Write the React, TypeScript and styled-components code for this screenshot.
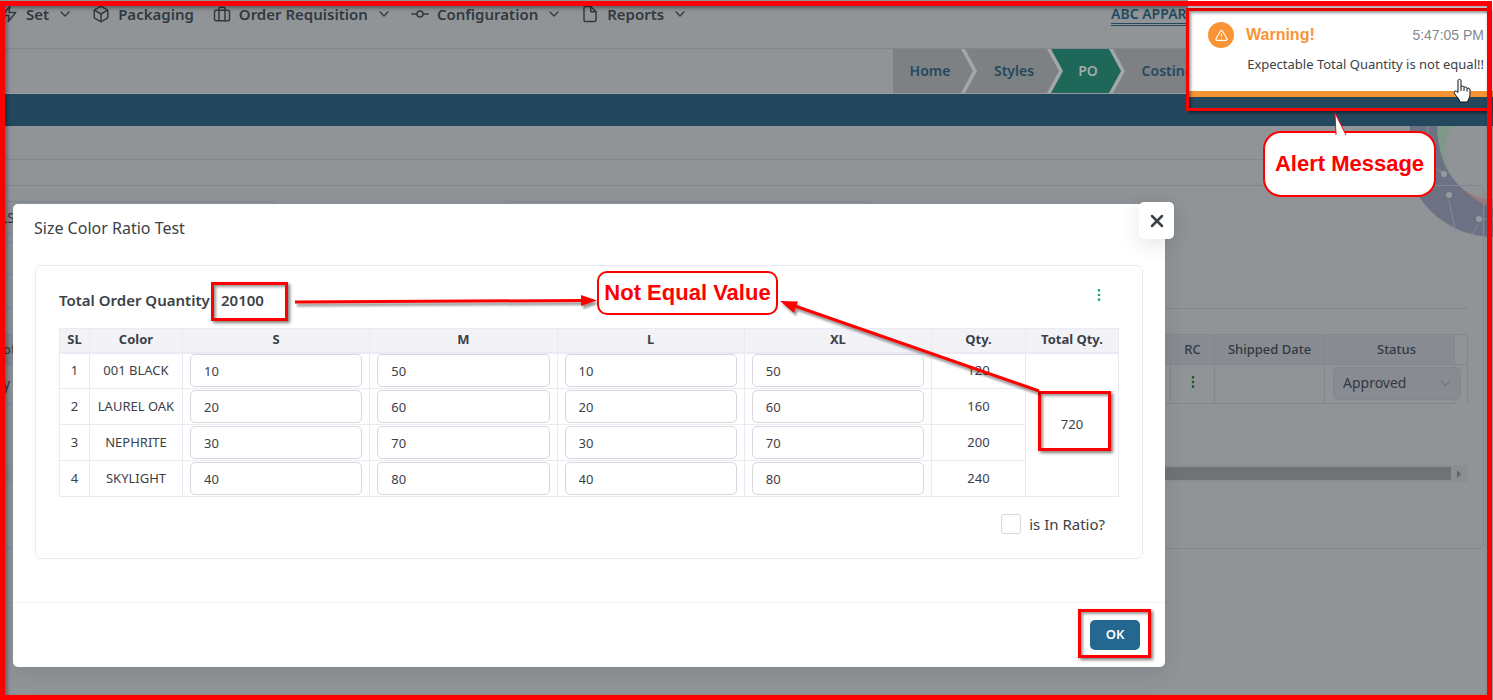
import React from 'react';
import styled, { createGlobalStyle, css } from 'styled-components';
import {
  FiAlertTriangle,
  FiBox,
  FiBriefcase,
  FiChevronDown,
  FiFile,
  FiGitCommit,
  FiMoreVertical,
  FiX,
  FiZap,
} from 'react-icons/fi';

const c = {
  page: '#909497',
  line: '#82868f',
  head: '#888b92',
  dimText: '#33393f',
  dimBlue: '#23495f',
  text: '#3b4147',
  border: '#ebe9f1',
  field: '#d8d6de',
  red: '#ff0000',
  orange: '#f99436',
};

const GlobalStyle = createGlobalStyle`
  *, *::before, *::after { box-sizing: border-box; }
  html { background: ${c.page}; }
  body {
    margin: 0;
    overflow: hidden;
    color: ${c.text};
    font-family: "Noto Sans", "Open Sans", sans-serif;
    font-size: 14px;
    line-height: 20px;
  }
  button, input, select { font: inherit; color: inherit; }
`;

/* ---------- page behind the dialog ---------- */

const Page = styled.div`
  position: relative;
  min-height: 100vh;
  overflow: hidden;
  background: ${c.page};
  color: ${c.dimText};
`;

const TopBar = styled.header`
  display: flex;
  justify-content: space-between;
  height: 49px;
  padding: 4px 300px 0 0;
  border-bottom: 1px solid ${c.line};
`;

const Nav = styled.nav`
  display: flex;
  align-items: flex-start;
  gap: 19px;
`;

const NavLink = styled.a`
  display: flex;
  align-items: center;
  gap: 8px;
  height: 20px;
  color: inherit;
  font-size: 15px;
  font-weight: 600;
  text-decoration: none;
  white-space: nowrap;
`;

const Company = styled.a`
  width: 82px;
  height: 20px;
  color: ${c.dimBlue};
  font-weight: 600;
  white-space: nowrap;
  text-decoration: underline double 1px;
  text-underline-offset: 4px;
`;

const StepRow = styled.div`
  display: flex;
  justify-content: flex-end;
  height: 45px;
  padding-right: 275px;
  border-bottom: 1px solid #999da0;
`;

const Steps = styled.div`
  display: flex;
  background: #a3a7aa;
`;

const Step = styled.a<{ $w: number; $active?: boolean; $first?: boolean }>`
  display: flex;
  align-items: center;
  justify-content: center;
  width: ${(p) => p.$w}px;
  margin-left: ${(p) => (p.$first ? 0 : -8)}px;
  padding: ${(p) => (p.$first ? '0 6px 0 0' : '0 0 0 4px')};
  background: ${(p) => (p.$active ? '#1e6759' : '#7d8184')};
  color: ${(p) => (p.$active ? '#a3aaab' : c.dimBlue)};
  font-weight: 600;
  text-decoration: none;
  clip-path: ${(p) =>
    p.$first
      ? 'polygon(0 0, calc(100% - 12px) 0, 100% 50%, calc(100% - 12px) 100%, 0 100%)'
      : 'polygon(0 0, calc(100% - 12px) 0, 100% 50%, calc(100% - 12px) 100%, 0 100%, 12px 50%)'};
`;

const TitleBar = styled.div`
  height: 32px;
  background: #23485e;
`;

const Strip = styled.div`
  height: 34px;
  margin-right: 9px;
  border-bottom: 1px solid ${c.line};
`;

const Ornament = styled.svg`
  position: absolute;
  top: 126px;
  right: 0;
`;

const Card = styled.section`
  position: relative;
  height: 364px;
  margin: 25px 9px 0 0;
  padding: 15px 15px 0 0;
  border: 1px solid ${c.line};
  border-left: 0;
  border-radius: 0 6px 6px 0;
`;

const FieldGrid = styled.div`
  display: grid;
  grid-template-columns: 276px 367px;
  gap: 8px 228px;
  padding-bottom: 33px;
  border-bottom: 1px solid ${c.line};
`;

const PageField = styled.input`
  height: 33px;
  padding: 0;
  border: 1px solid ${c.line};
  border-left: 0;
  border-radius: 5px;
  background: transparent;
`;

const StatusTable = styled.table`
  width: 100%;
  margin-top: 25px;
  border-collapse: collapse;
  table-layout: fixed;
  border-right: 1px solid ${c.line};

  th,
  td {
    height: 39px;
    padding: 0 2px;
    border: 1px solid ${c.line};
    font-weight: 400;
  }
  th {
    height: 30px;
    padding-bottom: 2px;
    background: ${c.head};
    font-size: 13px;
    font-weight: 500;
  }
  th:first-child,
  td:first-child {
    text-align: left;
  }
  th:nth-child(4) {
    padding-left: 16px;
  }
  th:last-child,
  td:last-child {
    background: transparent;
    border-left: 0;
    border-bottom: 0;
  }
`;

const SelectCell = styled.td`
  vertical-align: top;
`;

const SelectBox = styled.span`
  position: relative;
  display: block;
  width: 128px;
  margin: 2px 0 0 6px;

  svg {
    position: absolute;
    top: 8px;
    right: 7px;
    color: #777b80;
    pointer-events: none;
  }
`;

const Select = styled.select`
  appearance: none;
  display: block;
  width: 100%;
  height: 33px;
  padding: 0 9px 2px;
  border: 1px solid #84878e;
  border-radius: 5px;
  background: ${c.head};
`;

const RowMenuIcon = styled(FiMoreVertical)`
  display: block;
  margin: 0 auto 4px;
  color: #0f5a1e;
`;

const ScrollTrack = styled.div`
  display: flex;
  align-items: center;
  height: 17px;
  margin-top: 61px;
  background: #8b8f91;
`;

const ScrollThumb = styled.div`
  flex: 1;
  height: 13px;
  margin: 0 6px 0 13px;
  background: #6f7375;
`;

const ScrollArrow = styled.div`
  width: 0;
  margin-right: 7px;
  border: 4px solid transparent;
  border-right: 0;
  border-left-color: #5f6365;
`;

/* ---------- dialog ---------- */

const DialogLayer = styled.div`
  position: absolute;
  inset: 204px 328px auto 13px;
`;

const Dialog = styled.div`
  position: relative;
  border-radius: 5px;
  background: #fff;
  color: ${c.text};
  box-shadow: 0 5px 20px rgba(34, 41, 47, 0.12);
`;

const DialogTitle = styled.h1`
  margin: 0;
  padding: 14px 21px 27px;
  font-size: 16px;
  font-weight: 400;
  line-height: 20px;
`;

const CloseButton = styled.button`
  position: absolute;
  top: -2px;
  right: -9px;
  display: grid;
  place-items: center;
  width: 35px;
  height: 37px;
  padding: 0;
  border: 0;
  border-radius: 5px;
  background: #fff;
  box-shadow: 0 5px 20px rgba(34, 41, 47, 0.12);
`;

const Panel = styled.section`
  height: 294px;
  margin: 0 22px;
  padding: 20px 23px 0;
  border: 1px solid ${c.border};
  border-radius: 6px;
`;

const PanelHead = styled.div`
  display: flex;
  align-items: flex-start;
  height: 42px;
  padding-top: 4px;
  font-size: 15px;
  font-weight: 600;
`;

const TotalLabel = styled.span`
  width: 162px;
`;

const Marked = styled.span`
  position: relative;
`;

const MenuButton = styled.button`
  display: grid;
  width: 20px;
  height: 20px;
  margin: -5px 10px 0 auto;
  padding: 0;
  place-items: center;
  border: 0;
  background: none;
  color: #1aa184;
`;

const RatioTable = styled.table`
  width: 100%;
  border-collapse: collapse;
  table-layout: fixed;
  text-align: center;

  th,
  td {
    height: 36px;
    padding: 0 7px;
    border: 1px solid ${c.border};
    font-size: 13px;
    white-space: nowrap;
  }
  th {
    height: 24px;
    padding: 0 0 2px;
    border-bottom-width: 2px;
    background: #f3f2f7;
    font-weight: 700;
    line-height: 20px;
  }
`;

const TextCell = styled.td`
  && {
    padding: 0 0 2px;
  }
`;

const QtyInput = styled.input`
  display: block;
  width: 100%;
  height: 33px;
  padding: 0 13px;
  border: 1px solid ${c.field};
  border-radius: 5px;
  background: #fff;
  font-size: 13px;
`;

const RatioLabel = styled.label`
  display: flex;
  align-items: center;
  justify-content: flex-end;
  gap: 8px;
  padding: 17px 14px 0 0;
  font-size: 15px;
`;

const Checkbox = styled.input`
  appearance: none;
  width: 20px;
  height: 20px;
  margin: 0;
  border: 1px solid ${c.field};
  border-radius: 3px;
  background: #fff;
`;

const DialogFooter = styled.footer`
  display: flex;
  justify-content: flex-end;
  height: 65px;
  margin-top: 43px;
  padding: 17px 25px;
  border-top: 1px solid #f2f2f4;
`;

const OkButton = styled.button`
  position: relative;
  width: 50px;
  height: 30px;
  padding: 0 0 2px;
  border: 0;
  border-radius: 5px;
  background: #24678f;
  color: #fff;
  font-size: 13px;
  font-weight: 600;
`;

/* ---------- toast ---------- */

const Toast = styled.aside`
  position: absolute;
  top: 0;
  right: 0;
  width: 305px;
  height: 97px;
  padding: 22px 9px 0 20px;
  border-bottom: 6px solid ${c.orange};
  background: #fff;
  color: ${c.text};
`;

const ToastHead = styled.div`
  display: flex;
  align-items: center;
  gap: 12px;
  height: 26px;
  font-family: "Liberation Sans", Arial, sans-serif;
`;

const ToastIcon = styled.span`
  display: grid;
  place-items: center;
  width: 26px;
  height: 26px;
  border-radius: 50%;
  background: ${c.orange};
  color: #fff;
`;

const ToastTitle = styled.strong`
  flex: 1;
  color: ${c.orange};
  font-size: 16px;
`;

const ToastTime = styled.time`
  color: #85888c;
`;

const ToastText = styled.p`
  margin: 6px 0 0;
  font-size: 13px;
  text-align: right;
  white-space: nowrap;
`;

const HandCursor = styled.svg`
  position: absolute;
  top: 78px;
  right: 22px;
`;

/* ---------- red annotations ---------- */

const shadow = css`
  box-shadow: 2px 2px 3px rgba(0, 0, 0, 0.5), inset 2px 2px 3px rgba(0, 0, 0, 0.4);
`;

const Frame = styled.div`
  position: absolute;
  inset: 1px 1px 0 0;
  border: 5px solid ${c.red};
  box-shadow: inset 2px 2px 4px rgba(0, 0, 0, 0.4);
  pointer-events: none;
`;

const Highlight = styled.span<{ $inset: string }>`
  position: absolute;
  inset: ${(p) => p.$inset};
  border: 3px solid ${c.red};
  pointer-events: none;
  ${shadow}
`;

const Callout = styled.div`
  position: absolute;
  display: grid;
  place-items: center;
  border: 2px solid ${c.red};
  background: #fff;
  color: ${c.red};
  font-family: "Liberation Sans", Arial, sans-serif;
  font-size: 22px;
  font-weight: 700;
  white-space: nowrap;
`;

const ValueCallout = styled(Callout)`
  top: 67px;
  left: 584px;
  width: 181px;
  height: 44px;
  border-radius: 10px;
`;

const AlertCallout = styled(Callout)`
  top: 131px;
  right: 57px;
  width: 173px;
  height: 66px;
  border-radius: 18px;

  svg {
    position: absolute;
    top: -22px;
    left: 65px;
  }
`;

const Arrows = styled.svg`
  position: absolute;
  top: 0;
  left: 0;
  overflow: visible;
  pointer-events: none;
  filter: drop-shadow(2px 3px 1px rgba(0, 0, 0, 0.4));
`;

const menu = [
  { label: 'Set', Icon: FiZap, more: true },
  { label: 'Packaging', Icon: FiBox, more: false },
  { label: 'Order Requisition', Icon: FiBriefcase, more: true },
  { label: 'Configuration', Icon: FiGitCommit, more: true },
  { label: 'Reports', Icon: FiFile, more: true },
];

const sizes = ['S', 'M', 'L', 'XL'];

const rows = [
  { color: '001 BLACK', values: [10, 50, 10, 50], qty: 120 },
  { color: 'LAUREL OAK', values: [20, 60, 20, 60], qty: 160 },
  { color: 'NEPHRITE', values: [30, 70, 30, 70], qty: 200 },
  { color: 'SKYLIGHT', values: [40, 80, 40, 80], qty: 240 },
];

function RatioDialog() {
  return (
    <DialogLayer>
      <Dialog role="dialog" aria-labelledby="ratio-title">
        <DialogTitle id="ratio-title">Size Color Ratio Test</DialogTitle>
        <CloseButton type="button" aria-label="Close">
          <FiX size={20} strokeWidth={3} />
        </CloseButton>
        <Panel>
          <PanelHead>
            <TotalLabel>Total Order Quantity</TotalLabel>
            <Marked>
              20100
              <Highlight $inset="-8px -24px -11px -10px" />
            </Marked>
            <MenuButton type="button" aria-label="Options">
              <FiMoreVertical size={16} />
            </MenuButton>
          </PanelHead>
          <RatioTable>
            <colgroup>
              <col style={{ width: 30 }} />
              <col style={{ width: 93 }} />
              {sizes.map((s) => (
                <col key={s} />
              ))}
              <col style={{ width: 94 }} />
              <col style={{ width: 93 }} />
            </colgroup>
            <thead>
              <tr>
                <th>SL</th>
                <th>Color</th>
                {sizes.map((s) => (
                  <th key={s}>{s}</th>
                ))}
                <th>Qty.</th>
                <th>Total Qty.</th>
              </tr>
            </thead>
            <tbody>
              {rows.map((row, i) => (
                <tr key={row.color}>
                  <TextCell>{i + 1}</TextCell>
                  <TextCell>{row.color}</TextCell>
                  {row.values.map((v, j) => (
                    <td key={sizes[j]}>
                      <QtyInput aria-label={`${row.color} ${sizes[j]}`} defaultValue={v} />
                    </td>
                  ))}
                  <TextCell>{row.qty}</TextCell>
                  {i === 0 && (
                    <TextCell rowSpan={4}>
                      <Marked>
                        720
                        <Highlight $inset="-24px -28px -18px -23px" />
                      </Marked>
                    </TextCell>
                  )}
                </tr>
              ))}
            </tbody>
          </RatioTable>
          <RatioLabel>
            <Checkbox type="checkbox" />
            is In Ratio?
          </RatioLabel>
        </Panel>
        <DialogFooter>
          <OkButton type="button">
            OK
            <Highlight $inset="-11px -11px -8px -12px" />
          </OkButton>
        </DialogFooter>
        <Arrows width="1152" height="200">
          <g fill={c.red} stroke={c.red}>
            <path d="M282 98 L570 96.500" strokeWidth="3" />
            <path d="M584 96.500 L568 91 V102 Z" stroke="none" />
            <path d="M1026 187 L782 102" strokeWidth="3" />
            <path d="M767 97 L785 97.500 L781 109 Z" stroke="none" />
          </g>
        </Arrows>
        <ValueCallout>Not Equal Value</ValueCallout>
      </Dialog>
    </DialogLayer>
  );
}

function WarningToast() {
  return (
    <Toast role="alert">
      <ToastHead>
        <ToastIcon>
          <FiAlertTriangle size={13} />
        </ToastIcon>
        <ToastTitle>Warning!</ToastTitle>
        <ToastTime>5:47:05 PM</ToastTime>
      </ToastHead>
      <ToastText>Expectable Total Quantity is not equal!!</ToastText>
      <Highlight $inset="8px 3px -20px -2px" />
      <HandCursor width="18" height="25" viewBox="0 0 18 25">
        <path
          d="M5 14.500 V3 C5 .8 8 .8 8 3 V9 C8.500 7.600 11 7.900 11 9.500 C11.800 8.400 14 8.900 14 10.500 C15 9.700 17 10.200 17 12 V16.500 C17 20 15 21.500 14.500 24 H7 C6.500 21 3.500 18.500 1.500 15.500 C.5 13.500 2.500 12.300 3.700 13.300 Z"
          fill="#fff"
          stroke="#111"
          strokeLinejoin="round"
        />
        <path d="M8 9 V13 M11 9.500 V13 M14 10.500 V13.500" stroke="#111" fill="none" />
      </HandCursor>
    </Toast>
  );
}

export default function App() {
  return (
    <Page>
      <GlobalStyle />
      <TopBar>
        <Nav>
          {menu.map(({ label, Icon, more }) => (
            <NavLink key={label} href="#">
              <Icon size={18} />
              {label}
              {more && <FiChevronDown size={16} />}
            </NavLink>
          ))}
        </Nav>
        <Company href="#">ABC APPAREL</Company>
      </TopBar>
      <StepRow>
        <Steps>
          <Step href="#" $w={80} $first>Home</Step>
          <Step href="#" $w={94}>Styles</Step>
          <Step href="#" $w={70} $active>PO</Step>
          <Step href="#" $w={105}>Costing</Step>
        </Steps>
      </StepRow>
      <TitleBar />
      <Ornament width="83" height="111" viewBox="0 0 83 111">
        <circle cx="84" cy="21" r="90" fill="#6c7283" />
        <path d="M27 0 C28 25 38 50 51 61 C62 72 72 78 83 82 V0 Z" fill={c.page} />
        <path d="M27 0 C28 25 34 42 45 55 C33 38 32 16 42 0 Z" fill="#7d9a87" />
        <path d="M51 61 C62 72 72 78 83 82 V73 C70 73 60 69 51 61 Z" fill="#9a7a7e" />
        <g stroke="#878c97" fill="#959aa0">
          <path d="M18 0 V38 L34 47 M39 75 L46 108 M68 99 L60 111 M68 93 H83" fill="none" />
          <circle cx="34" cy="48" r="3" stroke="none" />
          <circle cx="39" cy="69" r="3" stroke="none" />
          <circle cx="69" cy="93" r="3" stroke="none" />
        </g>
      </Ornament>
      <Strip />
      <Card>
        <FieldGrid>
          <PageField aria-label="Style" defaultValue="LS" />
          <PageField aria-label="Buyer" />
          <PageField aria-label="Season" />
        </FieldGrid>
        <StatusTable>
          <colgroup>
            <col />
            <col style={{ width: 44 }} />
            <col style={{ width: 110 }} />
            <col style={{ width: 130 }} />
            <col style={{ width: 13 }} />
          </colgroup>
          <thead>
            <tr>
              <th>of</th>
              <th>RC</th>
              <th>Shipped Date</th>
              <th>Status</th>
              <th />
            </tr>
          </thead>
          <tbody>
            <tr>
              <td>y</td>
              <td>
                <RowMenuIcon size={16} />
              </td>
              <td />
              <SelectCell>
                <SelectBox>
                  <Select aria-label="Status" defaultValue="Approved">
                    <option>Approved</option>
                  </Select>
                  <FiChevronDown size={17} />
                </SelectBox>
              </SelectCell>
              <td />
            </tr>
          </tbody>
        </StatusTable>
        <ScrollTrack>
          <ScrollThumb />
          <ScrollArrow />
        </ScrollTrack>
      </Card>
      <RatioDialog />
      <WarningToast />
      <AlertCallout>
        Alert Message
        <svg width="18" height="24" viewBox="0 0 18 24">
          <path d="M6 24 L5 2 L16 24" fill="#fff" stroke="#ff0000" strokeWidth="1" />
        </svg>
      </AlertCallout>
      <Frame />
    </Page>
  );
}
